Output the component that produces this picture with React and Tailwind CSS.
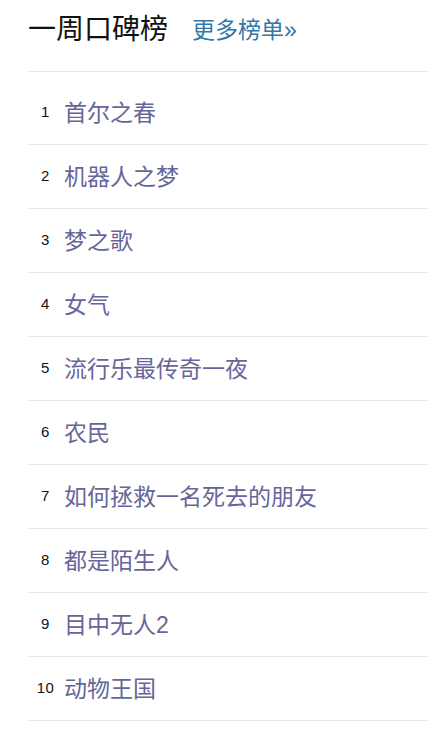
import React from 'react'

const movies = [
  '首尔之春',
  '机器人之梦',
  '梦之歌',
  '女气',
  '流行乐最传奇一夜',
  '农民',
  '如何拯救一名死去的朋友',
  '都是陌生人',
  '目中无人2',
  '动物王国',
]

export default function App() {
  return (
    <div
      className="w-[428px] min-h-[744px] bg-white pl-[28px]"
      style={{ fontFamily: '"Liberation Sans", "Noto Sans CJK SC", sans-serif' }}
    >
      {/* Header */}
      <div className="h-[72px] pt-[12px] border-b border-[#e6e6e6] flex items-start">
        <h2 className="text-[28px] leading-[36px] font-normal text-[#111]">一周口碑榜</h2>
        <a className="ml-[24px] text-[23px] leading-[36px] text-[#3377aa]">更多榜单»</a>
      </div>

      {/* List */}
      <ul className="pt-[9px]">
        {movies.map((title, i) => (
          <li key={i} className="h-[64px] border-b border-[#e6e6e6] flex items-center">
            <span className="w-[35px] text-center text-[15px] tracking-[0.5px] text-[#111]">{i + 1}</span>
            <a className="ml-[1px] text-[23px] leading-[32px] text-[#666699]">{title}</a>
          </li>
        ))}
      </ul>
    </div>
  )
}
